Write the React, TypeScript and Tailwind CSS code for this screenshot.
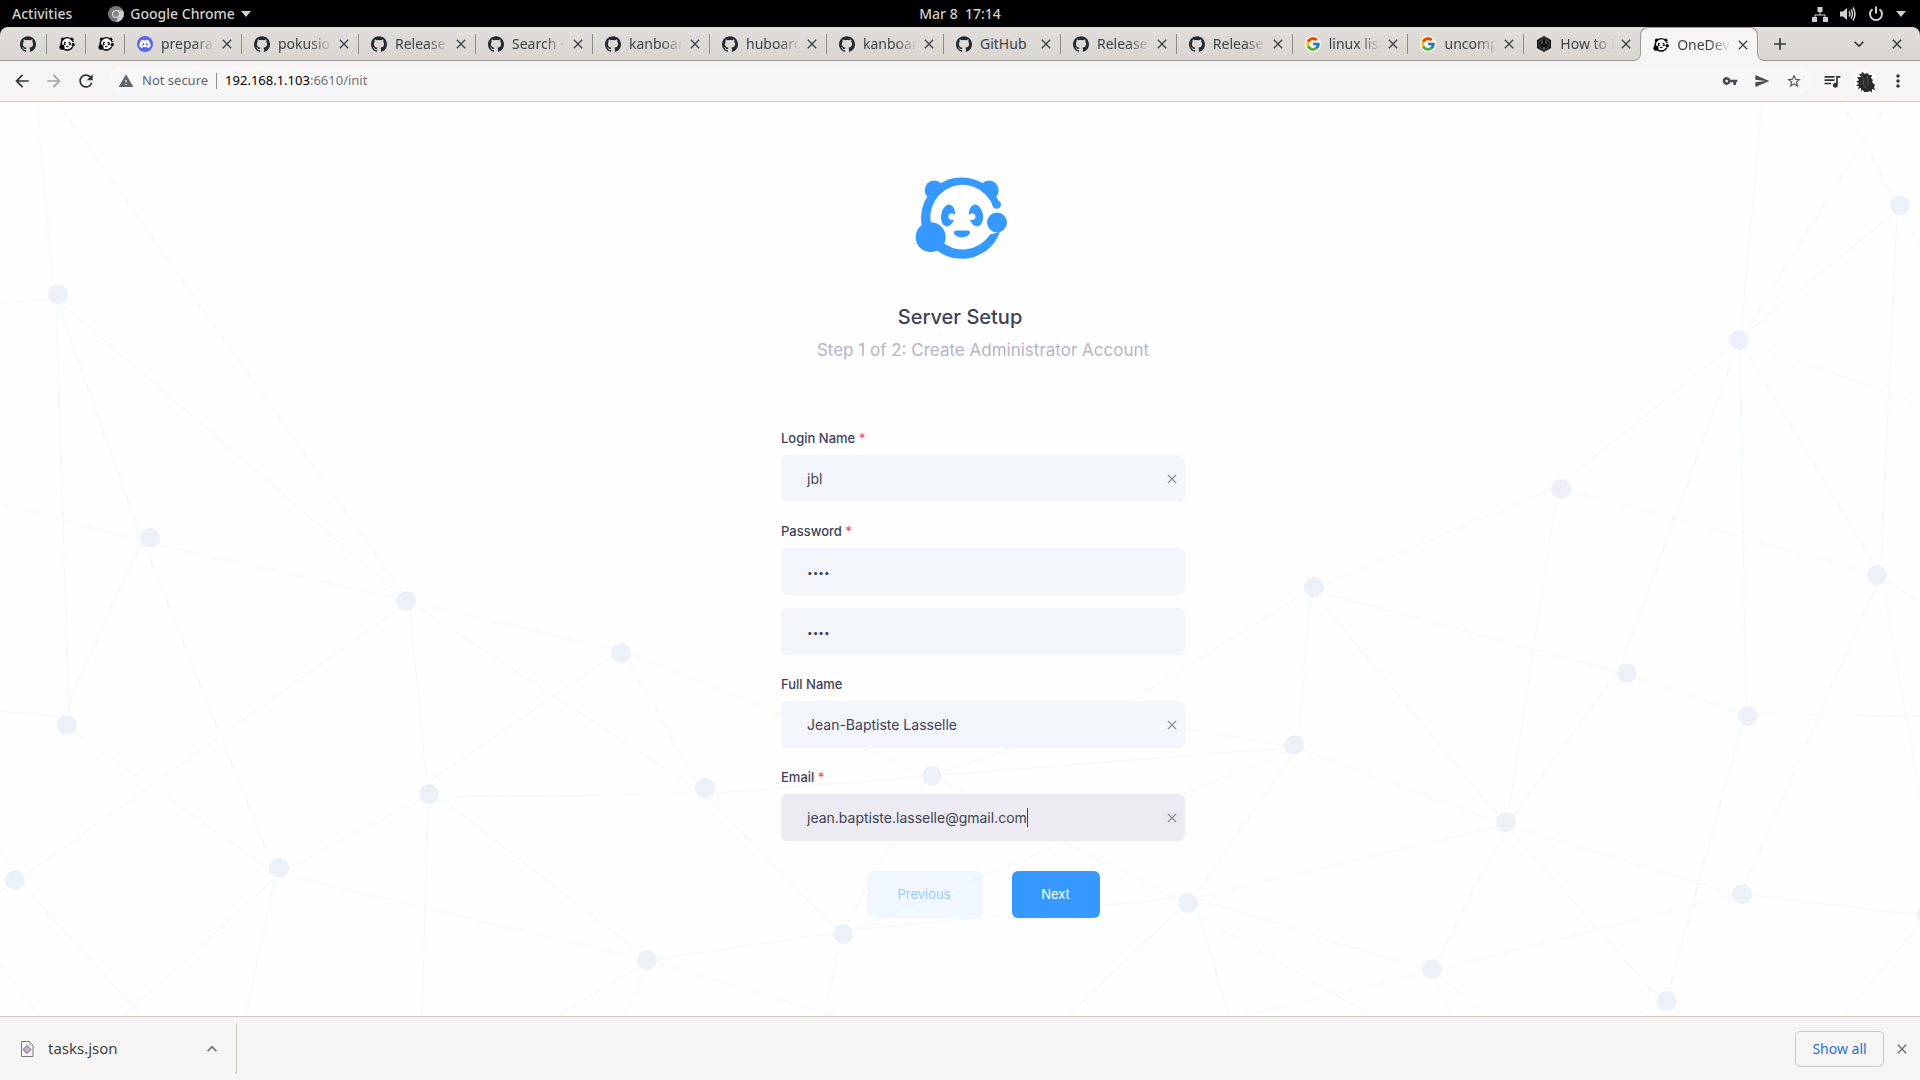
import { ReactNode } from "react";
import { FaDiscord } from "react-icons/fa";
import { FcGoogle } from "react-icons/fc";
import { SiGithub } from "react-icons/si";
import {
  MdAdd,
  MdArrowBack,
  MdArrowForward,
  MdClose,
  MdExpandLess,
  MdExpandMore,
  MdMoreVert,
  MdQueueMusic,
  MdRefresh,
  MdSend,
  MdStarBorder,
  MdVpnKey,
  MdWarning,
} from "react-icons/md";

const NODES: [number, number][] = [
  [58, 294], [150, 538], [406, 601], [67, 725], [15, 880], [279, 868], [429, 794], [621, 653],
  [705, 788], [647, 960], [843, 934], [932, 776], [1314, 587], [1561, 489], [1739, 340],
  [1900, 205], [1877, 575], [1627, 673], [1748, 716], [1294, 745], [1506, 822], [1742, 894],
  [1188, 903], [1432, 969], [1667, 1001], [1927, 914],
];

const EDGES: [number, number, number, number][] = [
  [37, 102, 53, 285], [57, 102, 402, 592], [0, 302, 50, 300], [62, 304, 399, 594],
  [58, 304, 141, 537], [145, 547, 271, 862], [56, 304, 69, 712], [0, 503, 141, 541],
  [160, 545, 399, 599], [141, 542, 62, 717], [0, 711, 62, 717], [73, 731, 268, 868],
  [400, 608, 24, 876], [0, 849, 12, 870], [0, 892, 6, 887], [24, 886, 141, 1016],
  [0, 964, 40, 1016], [275, 878, 124, 1016], [275, 878, 246, 1016], [289, 876, 638, 958],
  [288, 868, 421, 800], [410, 611, 427, 783], [416, 603, 613, 649], [416, 606, 695, 788],
  [427, 783, 614, 655], [439, 797, 696, 794], [428, 804, 422, 1016], [439, 797, 640, 953],
  [628, 660, 697, 783], [630, 654, 760, 706], [760, 706, 922, 773], [716, 793, 922, 777],
  [708, 797, 835, 928], [658, 959, 833, 933], [658, 963, 835, 1016], [640, 967, 557, 1016],
  [645, 970, 625, 1016], [942, 772, 1010, 749], [1010, 749, 1132, 701], [1185, 729, 1285, 745],
  [943, 775, 1285, 748], [942, 781, 1178, 900], [1288, 751, 1067, 842], [1067, 842, 853, 929],
  [925, 783, 846, 925], [853, 930, 1177, 898], [1179, 910, 1067, 1016], [839, 945, 825, 1013],
  [1762, 102, 1741, 329], [1842, 102, 1892, 196], [1888, 102, 1746, 331], [1894, 213, 1748, 332],
  [1911, 206, 1920, 203], [1901, 215, 1920, 245], [1897, 214, 1881, 563], [1750, 344, 1920, 404],
  [1745, 349, 1875, 566], [1740, 350, 1746, 705], [1736, 350, 1623, 660], [1731, 346, 1566, 480],
  [1551, 490, 1324, 584], [1572, 491, 1866, 571], [1556, 500, 1509, 810], [1323, 593, 1617, 672],
  [1316, 596, 1497, 814], [1310, 597, 1299, 735], [1305, 593, 1132, 701], [1887, 580, 1920, 602],
  [1883, 586, 1920, 796], [1877, 585, 1744, 885], [1637, 678, 1740, 713], [1616, 674, 1513, 816],
  [1757, 714, 1920, 716], [1742, 725, 1669, 990], [1303, 750, 1497, 822], [1292, 755, 1196, 895],
  [1198, 897, 1497, 827], [1198, 899, 1422, 969], [1192, 912, 1373, 1016], [1198, 911, 1229, 1016],
  [1504, 833, 1438, 960], [1516, 828, 1732, 893], [1511, 831, 1657, 996], [1442, 969, 1732, 895],
  [1751, 895, 1917, 915], [1422, 974, 1243, 1016], [1433, 977, 1452, 1016], [1440, 977, 1487, 1016],
  [1920, 924, 1843, 1016], [1633, 1016, 1657, 1005], [1674, 1008, 1682, 1016],
];

function Constellation() {
  return (
    <svg className="absolute inset-0 h-full w-full" viewBox="0 102 1920 914" preserveAspectRatio="xMidYMid slice" aria-hidden="true">
      <g stroke="#f6fafb" strokeWidth="2">
        {EDGES.map(([x1, y1, x2, y2], i) => (
          <line key={i} x1={x1} y1={y1} x2={x2} y2={y2} />
        ))}
      </g>
      <g fill="#ecf1f8">
        {NODES.map(([cx, cy], i) => (
          <circle key={i} cx={cx} cy={cy} r="10" />
        ))}
      </g>
    </svg>
  );
}

function Panda({ className, face = "#fff" }: { className: string; face?: string }) {
  return (
    <svg className={className} viewBox="39 36 285 248" fill="currentColor" aria-hidden="true">
      <circle cx="103" cy="75" r="29" />
      <circle cx="267" cy="75" r="29" />
      <circle cx="187" cy="157" r="98" fill={face} />
      <path d="M296 108A122 122 0 1 0 300 200L270 208A97 97 0 1 1 279 122Z" />
      <circle cx="290" cy="118" r="13" />
      <circle cx="291" cy="172" r="30" />
      <circle cx="92" cy="216" r="45" />
      <ellipse cx="144" cy="151" rx="21" ry="33" transform="rotate(10 144 151)" />
      <ellipse cx="228" cy="151" rx="21" ry="33" transform="rotate(-10 228 151)" />
      <path d="M170 148L162 147A10 10 0 1 0 158 164L170 166Z" fill={face} />
      <path d="M202 148L210 147A10 10 0 1 1 214 164L202 166Z" fill={face} />
      <path d="M168 196H204Q211 197 210 203C206 213 196 217 186 217S165 213 161 203Q161 197 168 196Z" />
    </svg>
  );
}

function HexIcon() {
  return (
    <svg className="h-4 w-4" viewBox="0 0 16 16" aria-hidden="true">
      <path d="M8 0l7 4v8l-7 4-7-4V4z" fill="#111" />
      <path d="M8 2.200l5 2.900v5.800l-5 2.900-5-2.900V5.100z" fill="none" stroke="#777" strokeWidth=".6" />
      <path d="M6 4v4M10 4v4M8 11v3" stroke="#888" strokeWidth=".8" />
    </svg>
  );
}

const ICONS: Record<string, ReactNode> = {
  github: <SiGithub className="h-4 w-4 text-[#24292f]" />,
  panda: <Panda className="h-4 w-4 text-black" />,
  discord: (
    <span className="flex h-4 w-4 items-center justify-center rounded-full bg-[#5865f2]">
      <FaDiscord className="h-3 w-3 text-white" />
    </span>
  ),
  google: (
    <span className="flex h-4 w-4 items-center justify-center rounded-full bg-white">
      <FcGoogle className="h-4 w-4" />
    </span>
  ),
  hex: <HexIcon />,
};

const WIDE_TABS = 8;

const TABS: { icon: string; title: string; active?: boolean }[] = [
  { icon: "discord", title: "prepara" },
  { icon: "github", title: "pokusio/" },
  { icon: "github", title: "Release" },
  { icon: "github", title: "Search ·" },
  { icon: "github", title: "kanboar" },
  { icon: "github", title: "huboard" },
  { icon: "github", title: "kanboar" },
  { icon: "github", title: "GitHub" },
  { icon: "github", title: "Release" },
  { icon: "github", title: "Release" },
  { icon: "google", title: "linux list" },
  { icon: "google", title: "uncomp" },
  { icon: "hex", title: "How to I" },
  { icon: "panda", title: "OneDev", active: true },
];

function Flare({ className }: { className: string }) {
  return (
    <svg className={className} viewBox="0 0 8 8" width="8" height="8" aria-hidden="true">
      <path d="M8 0V8H0V7.500Q7.500 7.500 7.500 0Z" fill="#f6f5f4" />
      <path d="M0 7.500Q7.500 7.500 7.500 0" fill="none" stroke="#9a9996" />
    </svg>
  );
}

function tabClass(index: number, active?: boolean) {
  if (active)
    return "relative z-10 -mb-px flex min-w-0 flex-1 items-center rounded-t-lg border border-b-0 border-[#9a9996] bg-[#f6f5f4] pl-3";
  return index < WIDE_TABS ? "flex w-[117px] items-center pl-3" : "flex min-w-0 flex-1 items-center pl-3";
}

function Tab({ icon, title, active, index }: { icon: string; title: string; active?: boolean; index: number }) {
  return (
    <div className={tabClass(index, active)}>
      {active && <Flare className="absolute bottom-0 -left-2" />}
      {active && <Flare className="absolute -right-2 bottom-0 -scale-x-100" />}
      <span className="shrink-0">{ICONS[icon]}</span>
      <span
        className={
          title === "GitHub"
            ? "ml-2 min-w-0 flex-1 whitespace-nowrap"
            : "ml-2 min-w-0 flex-1 whitespace-nowrap [mask-image:linear-gradient(to_right,#000_60%,transparent)]"
        }
      >
        {title}
      </span>
      <button type="button" aria-label={"Close " + title} className="mr-1.5 ml-1 shrink-0">
        <MdClose className="h-4 w-4 stroke-current" />
      </button>
      {index < TABS.length - 2 && <span className="h-5 w-px shrink-0 bg-[#8f8e8b]" />}
    </div>
  );
}

function TopBar() {
  return (
    <header className="grid h-[27px] grid-cols-3 items-center bg-black px-3 text-sm font-medium text-[#d0d0d0]">
      <div className="flex items-center">
        <button type="button">Activities</button>
        <button type="button" className="ml-9 flex items-center gap-1.5">
          <svg viewBox="0 0 16 16" className="h-4 w-4" aria-hidden="true">
            <circle cx="8" cy="8" r="8" fill="#777" />
            <path d="M8 4.500H15A8 8 0 0 1 8 16L11 9.500Z" fill="#ccc" />
            <circle cx="8" cy="8" r="4" fill="#ddd" />
            <circle cx="8" cy="8" r="3" fill="#888" />
          </svg>
          <span>Google Chrome</span>
          <svg viewBox="0 0 10 6" className="h-1.5 w-2.5" fill="currentColor" aria-hidden="true">
            <path d="M0 0h10L5 6z" />
          </svg>
        </button>
      </div>
      <div className="text-center whitespace-pre">Mar 8  17:14</div>
      <button type="button" aria-label="System menu" className="flex items-center gap-3 justify-self-end pr-0.5">
        <svg viewBox="0 0 16 16" className="h-4 w-4" fill="currentColor" aria-hidden="true">
          <path d="M5.500 1h5v5h-5zM0 11h5v5H0zM11 11h5v5h-5zM7.500 6h1v2.500h5V11h-1V9.500h-9V11h-1V8.500h5z" />
        </svg>
        <svg viewBox="0 0 16 16" className="h-4 w-4" fill="none" stroke="currentColor" strokeWidth="1.500" aria-hidden="true">
          <path d="M0 5.500h3L7 2v12L3 10.500H0z" fill="currentColor" stroke="none" />
          <path d="M9 5.500q1.800 2.500 0 5M11 3.500q3 4.500 0 9M13 1.500q4 6.500 0 13" />
        </svg>
        <svg viewBox="0 0 16 16" className="h-4 w-4" fill="none" stroke="currentColor" strokeWidth="2" aria-hidden="true">
          <path d="M4.500 3.200a6 6 0 1 0 7 0M8 .5v7" />
        </svg>
        <svg viewBox="0 0 10 6" className="h-1.5 w-2.5" fill="currentColor" aria-hidden="true">
          <path d="M0 0h10L5 6z" />
        </svg>
      </button>
    </header>
  );
}

function TabStrip() {
  return (
    <div className="bg-black">
      <nav aria-label="Tabs" className="flex h-[34px] rounded-t-lg border-b border-[#9a9996] bg-linear-to-b from-[#e1dedb] to-[#d9d5d0] pl-2 text-sm text-[#3d4246]">
        {["github", "panda", "panda"].map((icon, i) => (
          <div key={i} className="flex w-[39px] items-center justify-end gap-2.5">
            {ICONS[icon]}
            <span className="h-5 w-px bg-[#8f8e8b]" />
          </div>
        ))}
        <div className="flex min-w-0 flex-1">
          {TABS.map((t, i) => (
            <Tab key={i} {...t} index={i} />
          ))}
        </div>
        <div className="flex w-[162px] items-center pl-3 text-[#2e3436]">
          <button type="button" aria-label="New tab">
            <MdAdd className="h-5 w-5 stroke-current" />
          </button>
          <button type="button" aria-label="Search tabs" className="ml-auto">
            <MdExpandMore className="h-5 w-5" />
          </button>
          <button type="button" aria-label="Close window" className="mr-[15px] ml-5">
            <MdClose className="h-4 w-4 stroke-current" />
          </button>
        </div>
      </nav>
    </div>
  );
}

function Toolbar() {
  return (
    <div className="flex h-[41px] items-center border-b border-[#cdc7c2] bg-[#f6f5f4] pl-3 text-[#2e3436]">
      <div className="flex gap-3">
        <button type="button" aria-label="Back"><MdArrowBack className="h-5 w-5" /></button>
        <button type="button" aria-label="Forward" className="text-[#a3a3a2]"><MdArrowForward className="h-5 w-5" /></button>
        <button type="button" aria-label="Reload"><MdRefresh className="h-5 w-5" /></button>
      </div>
      <div className="ml-3 flex h-8 min-w-0 flex-1 items-center rounded-full bg-[#f7f7f7] pr-2 pl-2.5 text-[13px] text-[#5f6368]">
        <MdWarning className="h-4 w-4" />
        <span className="ml-2">Not secure</span>
        <span className="mx-2 h-4 w-px bg-[#8c8f92]" />
        <span className="text-[#717477]"><span className="text-black">192.168.1.103</span>:6610/init</span>
        <div className="ml-auto flex gap-4 text-[#4a4d50]">
          <button type="button" aria-label="Saved passwords"><MdVpnKey className="h-4 w-4" /></button>
          <button type="button" aria-label="Send this page"><MdSend className="h-4 w-4" /></button>
          <button type="button" aria-label="Bookmark this page"><MdStarBorder className="h-4 w-4" /></button>
        </div>
      </div>
      <div className="flex items-center gap-3 px-3">
        <button type="button" aria-label="Media controls"><MdQueueMusic className="h-5 w-5" /></button>
        <button type="button" aria-label="Profile">
          <svg viewBox="0 0 22 22" className="h-[22px] w-[22px]" aria-hidden="true">
            <circle cx="11" cy="11" r="11" fill="#fff" />
            <path d="M5 1l2 2 2-1 1 2 3-1 2 2 3 0-1 3 2 2-1 2 3 3-1 2 1 3-3-1 0 3-3-1-1 1-4 0-1-2-2 1 0-3-3 1 1-3-3 0 3-3-3-1 3-2-2-3 4 0-2-3 3 0z" fill="#2b2b2b" />
            <path d="M7 5l3 4-1 5 3 4M13 6l1 4 0 5" fill="none" stroke="#555" />
          </svg>
        </button>
        <button type="button" aria-label="Menu"><MdMoreVert className="h-5 w-5" /></button>
      </div>
    </div>
  );
}

function Label({ htmlFor, required, children }: { htmlFor: string; required?: boolean; children: ReactNode }) {
  return (
    <label htmlFor={htmlFor} className="mb-[7px] block text-[13px] leading-5 font-medium">
      {children}
      {required && <span className="text-[#f64e60]"> *</span>}
    </label>
  );
}

function TextField({ id, value, focused }: { id: string; value: string; focused?: boolean }) {
  return (
    <div
      className={
        focused
          ? "flex h-[47px] items-center rounded-md bg-[#ebebf1] pr-2 pl-[26px]"
          : "flex h-[47px] items-center rounded-md bg-[#f2f5f9] pr-2 pl-[26px]"
      }
    >
      <input
        id={id}
        type="text"
        defaultValue={value}
        className={focused ? "field-sizing-content bg-transparent caret-transparent outline-none" : "min-w-0 flex-1 bg-transparent outline-none"}
      />
      {focused && <span className="h-[19px] w-px bg-[#3f4254]" />}
      <button type="button" aria-label="Clear" className="ml-auto text-[#8f8f8f]">
        <svg viewBox="0 0 10 10" className="h-2.5 w-2.5" fill="none" stroke="currentColor" strokeWidth="1.200" aria-hidden="true">
          <path d="M1 1l8 8M9 1L1 9" />
        </svg>
      </button>
    </div>
  );
}

function PasswordField({ id, label }: { id: string; label?: string }) {
  return (
    <input
      id={id}
      aria-label={label}
      type="password"
      defaultValue="abcd"
      className="block h-[47px] w-full rounded-md bg-[#f2f5f9] px-[26px] text-[10px] outline-none"
    />
  );
}

function SetupPage() {
  return (
    <main className="relative flex-1 overflow-hidden bg-[#fefefe] font-[Inter,sans-serif] text-sm text-[#3f4254]">
      <Constellation />
      <div className="relative mx-auto w-[450px] pt-[75px]">
        <Panda className="mx-auto h-[83px] w-[95px] text-[#3699ff]" face="#fefefe" />
        <h1 className="mt-[42px] text-center text-xl leading-[30px] font-medium">Server Setup</h1>
        <div className="pl-[46px]">
          <p className="mt-1.5 text-center text-[17px] leading-6 text-[#b5b5c3]">Step 1 of 2: Create Administrator Account</p>
          <form className="mt-[66px]" onSubmit={(e) => e.preventDefault()}>
            <div className="flex flex-col gap-[19px]">
              <div>
                <Label htmlFor="login" required>Login Name</Label>
                <TextField id="login" value="jbl" />
              </div>
              <div>
                <Label htmlFor="password" required>Password</Label>
                <PasswordField id="password" />
                <div className="mt-[13px]">
                  <PasswordField id="password2" label="Confirm password" />
                </div>
              </div>
              <div>
                <Label htmlFor="fullname">Full Name</Label>
                <TextField id="fullname" value="Jean-Baptiste Lasselle" />
              </div>
              <div>
                <Label htmlFor="email" required>Email</Label>
                <TextField id="email" value="jean.baptiste.lasselle@gmail.com" focused />
              </div>
            </div>
            <div className="mt-[30px] flex justify-center gap-[30px] text-[13px]">
              <button type="button" disabled className="h-[47px] w-[115px] rounded-md bg-[#e1f0ff]/50 text-[#9acbff]">Previous</button>
              <button type="submit" className="h-[47px] w-[88px] rounded-md bg-[#3699ff] text-white">Next</button>
            </div>
          </form>
        </div>
      </div>
    </main>
  );
}

function DownloadBar() {
  return (
    <footer className="flex h-16 items-center border-t border-[#cdc7c2] bg-[#f6f5f4] pr-2.5 text-[15px] text-[#3d4246]">
      <button type="button" className="flex h-[51px] w-[237px] items-center border-r border-[#cdc7c2] pr-3.5 pl-5">
        <svg viewBox="0 0 14 16" className="h-4 w-3.5" aria-hidden="true">
          <path d="M1.500.5h8l3.500 3.500v11.500h-11.500z" fill="#fafafa" stroke="#777" />
          <path d="M9.500.5V4H13z" fill="#ddd" stroke="#999" strokeWidth=".6" />
          <path d="M7 4.500l4 4-4 4-4-4z" fill="#c7b3cf" stroke="#75507b" />
        </svg>
        <span className="ml-3.5">tasks.json</span>
        <MdExpandLess className="ml-auto h-5 w-5 text-[#6b706f]" />
      </button>
      <button type="button" className="mr-2.5 ml-auto h-9 w-[89px] rounded-[5px] border border-[#cdc7c2] text-sm text-[#2a6fd6]">Show all</button>
      <button type="button" aria-label="Close downloads bar">
        <MdClose className="h-4 w-4 stroke-current text-[#6b706f]" />
      </button>
    </footer>
  );
}

export default function App() {
  return (
    <div className="flex min-h-screen flex-col font-['Noto_Sans',sans-serif]">
      <TopBar />
      <TabStrip />
      <Toolbar />
      <SetupPage />
      <DownloadBar />
    </div>
  );
}
